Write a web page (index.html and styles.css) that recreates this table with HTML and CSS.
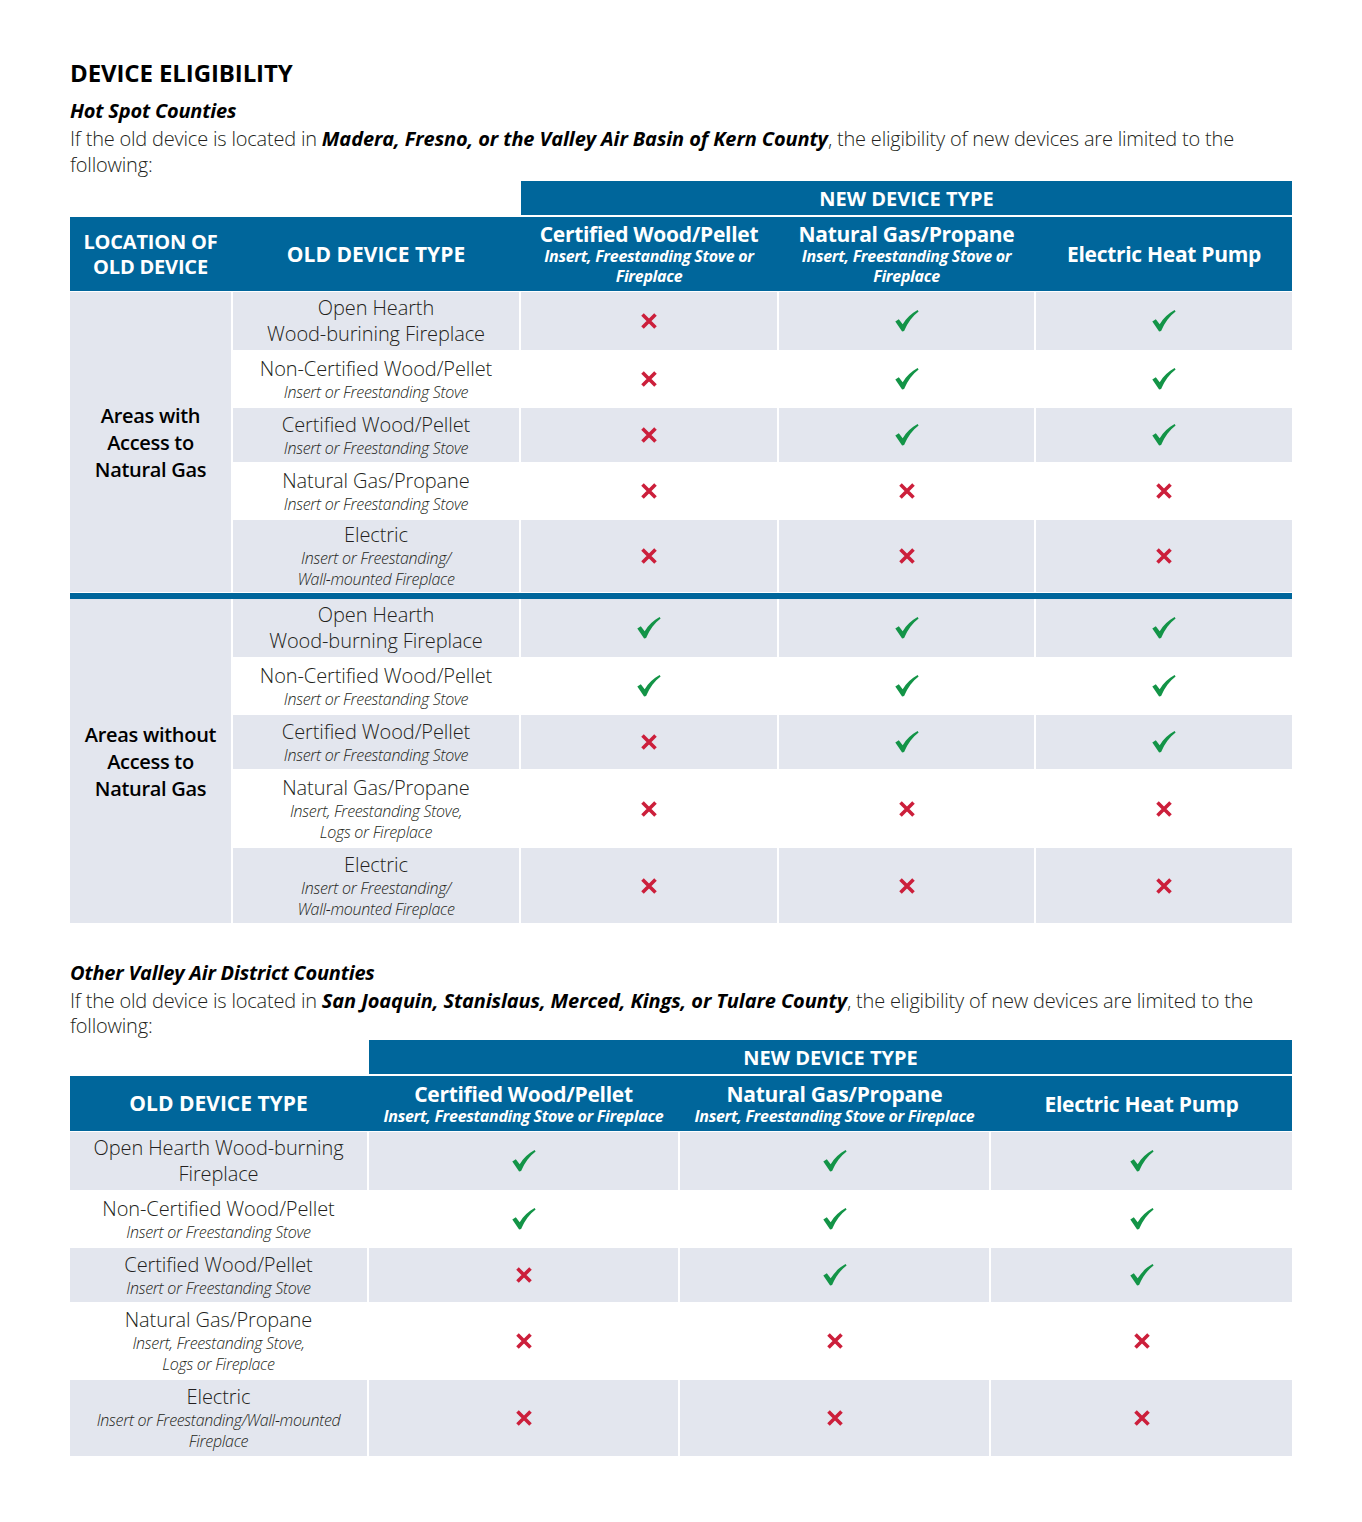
FILE: index.html
```html
<!DOCTYPE html>
<html lang="en">
<head>
<meta charset="utf-8">
<title>Device Eligibility</title>
<link rel="stylesheet" href="styles.css">
</head>
<body>
<svg width="0" height="0" class="defs" aria-hidden="true">
  <defs>
    <symbol id="chk" viewBox="0 0 24 22">
      <path d="M0.3 11.6 L3.8 9.2 L7.7 14.2 C11.5 8.3 16.5 3.3 22.6 0.1 L23.6 1.4 C17.6 5.9 12.7 12.6 9.1 20.9 L7.1 21.6 Z" fill="#139447"/>
    </symbol>
    <symbol id="crs" viewBox="0 0 18 18">
      <path d="M2.5 2.5 L15.5 15.5 M15.5 2.5 L2.5 15.5" stroke="#cc1f3b" stroke-width="3.6" stroke-linecap="butt" fill="none"/>
    </symbol>
  </defs>
</svg>

<main class="page">
  <h1 class="title">DEVICE ELIGIBILITY</h1>

  <section class="section">
    <h2 class="subtitle">Hot Spot Counties</h2>
    <p class="intro">If the old device is located in <b>Madera, Fresno, or the Valley Air Basin of Kern County</b>, the eligibility of new devices are limited to the following:</p>

    <div class="tbl t1">
      <div class="toprow cols1">
        <div class="topcell span3">NEW DEVICE TYPE</div>
      </div>
      <div class="headrow">
        <div class="cols1 headgrid">
          <div class="hcell">LOCATION OF<br>OLD DEVICE</div>
          <div class="hcell big">OLD DEVICE TYPE</div>
          <div class="hcell cond"><span class="hmain">Certified Wood/Pellet</span><span class="hsub">Insert, Freestanding Stove or<br>Fireplace</span></div>
          <div class="hcell cond"><span class="hmain">Natural Gas/Propane</span><span class="hsub">Insert, Freestanding Stove or<br>Fireplace</span></div>
          <div class="hcell cond"><span class="hmain">Electric Heat Pump</span></div>
        </div>
      </div>

      <div class="body cols1 g1">
        <div class="loc">Areas with<br>Access to<br>Natural Gas</div>

        <div class="c g"><span class="m">Open Hearth<br>Wood-burining Fireplace</span></div>
        <div class="c g"><svg class="x"><use href="#crs"/></svg></div>
        <div class="c g"><svg class="v"><use href="#chk"/></svg></div>
        <div class="c g"><svg class="v"><use href="#chk"/></svg></div>

        <div class="c"><span class="m">Non-Certified Wood/Pellet</span><span class="s">Insert or Freestanding Stove</span></div>
        <div class="c"><svg class="x"><use href="#crs"/></svg></div>
        <div class="c"><svg class="v"><use href="#chk"/></svg></div>
        <div class="c"><svg class="v"><use href="#chk"/></svg></div>

        <div class="c g"><span class="m">Certified Wood/Pellet</span><span class="s">Insert or Freestanding Stove</span></div>
        <div class="c g"><svg class="x"><use href="#crs"/></svg></div>
        <div class="c g"><svg class="v"><use href="#chk"/></svg></div>
        <div class="c g"><svg class="v"><use href="#chk"/></svg></div>

        <div class="c"><span class="m">Natural Gas/Propane</span><span class="s">Insert or Freestanding Stove</span></div>
        <div class="c"><svg class="x"><use href="#crs"/></svg></div>
        <div class="c"><svg class="x"><use href="#crs"/></svg></div>
        <div class="c"><svg class="x"><use href="#crs"/></svg></div>

        <div class="c g"><span class="m">Electric</span><span class="s">Insert or Freestanding/<br>Wall-mounted Fireplace</span></div>
        <div class="c g"><svg class="x"><use href="#crs"/></svg></div>
        <div class="c g"><svg class="x"><use href="#crs"/></svg></div>
        <div class="c g"><svg class="x"><use href="#crs"/></svg></div>
      </div>

      <div class="divider"></div>

      <div class="body cols1 g2">
        <div class="loc">Areas without<br>Access to<br>Natural Gas</div>

        <div class="c g"><span class="m">Open Hearth<br>Wood-burning Fireplace</span></div>
        <div class="c g"><svg class="v"><use href="#chk"/></svg></div>
        <div class="c g"><svg class="v"><use href="#chk"/></svg></div>
        <div class="c g"><svg class="v"><use href="#chk"/></svg></div>

        <div class="c"><span class="m">Non-Certified Wood/Pellet</span><span class="s">Insert or Freestanding Stove</span></div>
        <div class="c"><svg class="v"><use href="#chk"/></svg></div>
        <div class="c"><svg class="v"><use href="#chk"/></svg></div>
        <div class="c"><svg class="v"><use href="#chk"/></svg></div>

        <div class="c g"><span class="m">Certified Wood/Pellet</span><span class="s">Insert or Freestanding Stove</span></div>
        <div class="c g"><svg class="x"><use href="#crs"/></svg></div>
        <div class="c g"><svg class="v"><use href="#chk"/></svg></div>
        <div class="c g"><svg class="v"><use href="#chk"/></svg></div>

        <div class="c"><span class="m">Natural Gas/Propane</span><span class="s">Insert, Freestanding Stove,<br>Logs or Fireplace</span></div>
        <div class="c"><svg class="x"><use href="#crs"/></svg></div>
        <div class="c"><svg class="x"><use href="#crs"/></svg></div>
        <div class="c"><svg class="x"><use href="#crs"/></svg></div>

        <div class="c g"><span class="m">Electric</span><span class="s">Insert or Freestanding/<br>Wall-mounted Fireplace</span></div>
        <div class="c g"><svg class="x"><use href="#crs"/></svg></div>
        <div class="c g"><svg class="x"><use href="#crs"/></svg></div>
        <div class="c g"><svg class="x"><use href="#crs"/></svg></div>
      </div>
    </div>
  </section>

  <section class="section second">
    <h2 class="subtitle">Other Valley Air District Counties</h2>
    <p class="intro">If the old device is located in <b>San Joaquin, Stanislaus, Merced, Kings, or Tulare County</b>, the eligibility of new devices are limited to the following:</p>

    <div class="tbl t2">
      <div class="toprow cols2">
        <div class="topcell span2b">NEW DEVICE TYPE</div>
      </div>
      <div class="headrow">
        <div class="cols2 headgrid h2">
          <div class="hcell big">OLD DEVICE TYPE</div>
          <div class="hcell cond"><span class="hmain">Certified Wood/Pellet</span><span class="hsub">Insert, Freestanding Stove or Fireplace</span></div>
          <div class="hcell cond"><span class="hmain">Natural Gas/Propane</span><span class="hsub">Insert, Freestanding Stove or Fireplace</span></div>
          <div class="hcell cond"><span class="hmain">Electric Heat Pump</span></div>
        </div>
      </div>

      <div class="body cols2 g3">
        <div class="c g"><span class="m">Open Hearth Wood-burning<br>Fireplace</span></div>
        <div class="c g"><svg class="v"><use href="#chk"/></svg></div>
        <div class="c g"><svg class="v"><use href="#chk"/></svg></div>
        <div class="c g"><svg class="v"><use href="#chk"/></svg></div>

        <div class="c"><span class="m">Non-Certified Wood/Pellet</span><span class="s">Insert or Freestanding Stove</span></div>
        <div class="c"><svg class="v"><use href="#chk"/></svg></div>
        <div class="c"><svg class="v"><use href="#chk"/></svg></div>
        <div class="c"><svg class="v"><use href="#chk"/></svg></div>

        <div class="c g"><span class="m">Certified Wood/Pellet</span><span class="s">Insert or Freestanding Stove</span></div>
        <div class="c g"><svg class="x"><use href="#crs"/></svg></div>
        <div class="c g"><svg class="v"><use href="#chk"/></svg></div>
        <div class="c g"><svg class="v"><use href="#chk"/></svg></div>

        <div class="c"><span class="m">Natural Gas/Propane</span><span class="s">Insert, Freestanding Stove,<br>Logs or Fireplace</span></div>
        <div class="c"><svg class="x"><use href="#crs"/></svg></div>
        <div class="c"><svg class="x"><use href="#crs"/></svg></div>
        <div class="c"><svg class="x"><use href="#crs"/></svg></div>

        <div class="c g"><span class="m">Electric</span><span class="s">Insert or Freestanding/Wall-mounted<br>Fireplace</span></div>
        <div class="c g"><svg class="x"><use href="#crs"/></svg></div>
        <div class="c g"><svg class="x"><use href="#crs"/></svg></div>
        <div class="c g"><svg class="x"><use href="#crs"/></svg></div>
      </div>
    </div>
  </section>
</main>
</body>
</html>
```
FILE: styles.css
```css
* { box-sizing: border-box; }

html, body {
  margin: 0;
  padding: 0;
  background: #ffffff;
}

body {
  font-family: "Open Sans", "Noto Sans", "Liberation Sans", sans-serif;
  color: #231f20;
}

.defs {
  position: absolute;
  width: 0;
  height: 0;
  overflow: hidden;
}

.page {
  width: 1362px;
  padding: 57px 70px 40px 70px;
}

.title {
  margin: 0;
  font-size: 24px;
  line-height: 32px;
  font-weight: 700;
  color: #000;
  letter-spacing: -0.1px;
}

.subtitle {
  margin: 9px 0 0 0;
  font-size: 20px;
  line-height: 26px;
  font-weight: 700;
  font-style: italic;
  color: #000;
  letter-spacing: -0.2px;
}

.intro {
  margin: 2px 0 0 0;
  font-size: 20px;
  line-height: 26px;
  font-weight: 300;
  color: #231f20;
  letter-spacing: -0.2px;
}

.intro b {
  font-weight: 700;
  font-style: italic;
  color: #000;
  letter-spacing: -0.1px;
}

.second {
  margin-top: 37px;
}

.second .intro {
  line-height: 25px;
}

.tbl {
  width: 1222px;
  margin-top: 3px;
}

.second .tbl {
  margin-top: 2px;
}

.cols1 {
  display: grid;
  grid-template-columns: 161px 286px 256px 255px 256px;
  column-gap: 2px;
}

.cols2 {
  display: grid;
  grid-template-columns: 297px 309px 309px 301px;
  column-gap: 2px;
}

.toprow {
  height: 34px;
  margin-bottom: 2px;
}

.topcell {
  background: #00669b;
  color: #fff;
  font-weight: 700;
  font-size: 20px;
  letter-spacing: 0;
  display: flex;
  align-items: center;
  justify-content: center;
}

.span3 { grid-column: 3 / 6; }
.span2b { grid-column: 2 / 5; }

.headrow {
  background: #00669b;
  color: #fff;
}

.headgrid {
  height: 74px;
}

.headgrid.h2 {
  height: 55px;
}

.hcell {
  display: flex;
  flex-direction: column;
  align-items: center;
  justify-content: center;
  text-align: center;
  font-weight: 700;
  font-size: 20px;
  line-height: 25px;
  letter-spacing: -0.2px;
}

.hcell.big {
  font-size: 21px;
  letter-spacing: 0;
}

.hcell.cond {
  letter-spacing: -0.3px;
}

.hmain {
  font-size: 21px;
  line-height: 24px;
  font-stretch: 93%;
}

.hsub {
  font-size: 16px;
  line-height: 20px;
  font-style: italic;
  font-weight: 700;
  font-stretch: 96%;
  letter-spacing: -0.3px;
}

.body {
  row-gap: 2px;
  margin-top: 1px;
}

.g1 {
  grid-template-rows: 58px 54px 54px 54px 72px;
}

.g2 {
  margin-top: 0;
  grid-template-rows: 58px 54px 54px 75px 75px;
}

.g3 {
  grid-template-rows: 58px 54px 54px 74px 76px;
}

.loc {
  grid-column: 1;
  grid-row: 1 / 6;
  background: #e3e6ee;
  display: flex;
  align-items: center;
  justify-content: center;
  text-align: center;
  font-weight: 600;
  font-size: 20px;
  line-height: 27px;
  letter-spacing: -0.3px;
  color: #000;
}

.divider {
  height: 6px;
  margin-top: 1px;
  background: #00669b;
}

.c {
  display: flex;
  flex-direction: column;
  align-items: center;
  justify-content: center;
  text-align: center;
  background: #ffffff;
}

.c.g {
  background: #e3e6ee;
}

.m {
  font-size: 20px;
  line-height: 26px;
  font-weight: 300;
  color: #231f20;
  letter-spacing: -0.1px;
}

.s {
  font-size: 16px;
  line-height: 21px;
  font-weight: 300;
  font-style: italic;
  color: #231f20;
  letter-spacing: -0.3px;
}

.v {
  width: 24px;
  height: 22px;
}

.x {
  width: 18px;
  height: 18px;
}
```
